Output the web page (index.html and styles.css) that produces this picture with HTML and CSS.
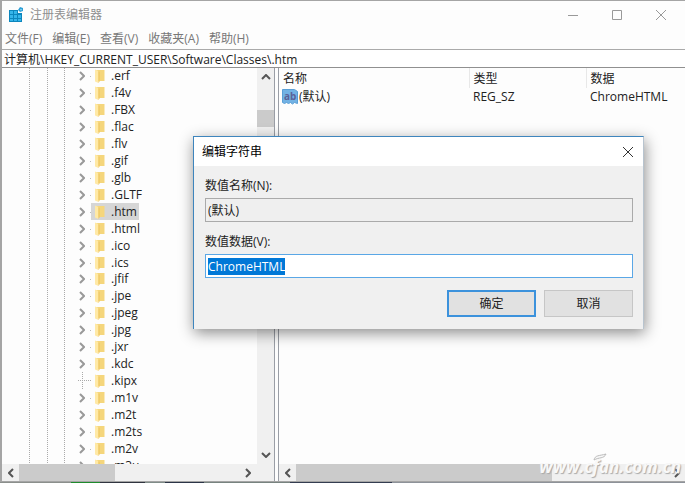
FILE: index.html
```
<!DOCTYPE html>
<html lang="zh-CN">
  <head>
    <meta charset="UTF-8">
    <title>注册表编辑器</title>
    <link rel="stylesheet" href="styles.css">
  </head>
  <body>
    <div class="window">
      <header class="titlebar">
        <svg class="app-icon" width="16" height="16" viewBox="0 0 16 16">
          <path d="M1 3h9v3h4v9H1z" fill="#0c86bd" />
          <path d="M2 4h3v3H2zM6 4h3v3H6zM2 8h3v3H2zM6 8h3v3H6zM10 8h3v3h-3zM2 12h3v2H2zM6 12h3v2H6zM10 12h3v2h-3z" fill="#35b5ea" />
          <path d="M12 0l3 1v3l-3 1-2-2z" fill="#2d9fd6" />
          <path d="M12 2l2 0-1 2z" fill="#8edaf7" />
        </svg>
        <h1>注册表编辑器</h1>
        <div class="window-buttons">
          <button aria-label="最小化"><svg width="10" height="10" viewBox="0 0 10 10"><path d="M0 5.5h10" /></svg></button>
          <button aria-label="最大化"><svg width="10" height="10" viewBox="0 0 10 10"><path d="M0.5 0.5h9v9h-9z" /></svg></button>
          <button aria-label="关闭"><svg width="10" height="10" viewBox="0 0 10 10"><path d="M0 0l10 10M10 0L0 10" /></svg></button>
        </div>
      </header>

      <nav class="menu">
        <button>文件(F)</button>
        <button>编辑(E)</button>
        <button>查看(V)</button>
        <button>收藏夹(A)</button>
        <button>帮助(H)</button>
      </nav>

      <input class="address" type="text" aria-label="地址" value="计算机\HKEY_CURRENT_USER\Software\Classes\.htm">

      <main class="panes">
        <section class="tree-pane">
          <div class="tree-view">
            <ul class="tree" id="tree"></ul>
          </div>
          <div class="scroll-v">
            <button aria-label="向上"><svg width="10" height="6" viewBox="0 0 10 6"><path d="M1 5l4-4 4 4" /></svg></button>
            <div class="thumb"></div>
            <button aria-label="向下"><svg width="10" height="6" viewBox="0 0 10 6"><path d="M1 1l4 4 4-4" /></svg></button>
          </div>
          <div class="scroll-h tree-scroll">
            <button aria-label="向左"><svg width="6" height="10" viewBox="0 0 6 10"><path d="M5 1L1 5l4 4" /></svg></button>
            <div class="thumb"></div>
            <button aria-label="向右"><svg width="6" height="10" viewBox="0 0 6 10"><path d="M1 1l4 4-4 4" /></svg></button>
          </div>
        </section>

        <section class="value-pane">
          <table class="values">
            <thead>
              <tr>
                <th class="col-name">名称</th>
                <th class="col-type">类型</th>
                <th>数据</th>
              </tr>
            </thead>
            <tbody>
              <tr>
                <td>
                  <div class="value-name">
                    <svg width="16" height="16" viewBox="0 0 16 16">
                      <path d="M0.5 0.5h12l3 2v12l-3-1-2 1.5-2-1.5-2 1-2-1-2 1-2-1z" fill="#72b2e4" stroke="#5a9fd6" />
                      <text x="2" y="11">ab</text>
                    </svg>
                    <span>(默认)</span>
                  </div>
                </td>
                <td>REG_SZ</td>
                <td>ChromeHTML</td>
              </tr>
            </tbody>
          </table>
          <div class="scroll-h value-scroll">
            <button aria-label="向左"><svg width="6" height="10" viewBox="0 0 6 10"><path d="M5 1L1 5l4 4" /></svg></button>
            <div class="thumb"></div>
            <button aria-label="向右"><svg width="6" height="10" viewBox="0 0 6 10"><path d="M1 1l4 4-4 4" /></svg></button>
          </div>
        </section>
      </main>
    </div>

    <form class="dialog" role="dialog" aria-labelledby="dialogTitle">
      <div class="dialog-title">
        <h2 id="dialogTitle">编辑字符串</h2>
        <button type="button" aria-label="关闭"><svg width="12" height="12" viewBox="0 0 12 12"><path d="M1 1l10 10M11 1L1 11" /></svg></button>
      </div>
      <div class="dialog-body">
        <label for="valueName">数值名称(N):</label>
        <input id="valueName" type="text" value="(默认)" readonly>
        <label for="valueData">数值数据(V):</label>
        <input id="valueData" type="text" value="ChromeHTML">
        <div class="actions">
          <button type="button" class="default">确定</button>
          <button type="button">取消</button>
        </div>
      </div>
    </form>

    <div class="watermark">www.cfan.com.cn
      <svg width="14" height="8" viewBox="0 0 14 8"><path d="M1 7C2 2 6 3 13 1 11 6 6 4 1 7z" /></svg>
    </div>

    <script>
      const keys = [
        ".erf", ".f4v", ".FBX", ".flac", ".flv", ".gif", ".glb", ".GLTF",
        ".htm", ".html", ".ico", ".ics", ".jfif", ".jpe", ".jpeg", ".jpg",
        ".jxr", ".kdc", ".kipx", ".m1v", ".m2t", ".m2ts", ".m2v", ".m3u"
      ];

      const arrow = '<svg class="arrow" width="6" height="10" viewBox="0 0 6 10"><path d="M1 1l4 4-4 4" /></svg>';
      const folder =
        '<svg class="folder" width="10" height="14" viewBox="0 0 10 14">' +
        '<path d="M1 1h8.5v11H1z" fill="#f5d67c" />' +
        '<path d="M0 0.5l3.5 1.5v12L0 12.5z" fill="#ffe9a6" />' +
        '<path d="M3.5 2v12l1-1.5V3z" fill="#eec35c" /></svg>';

      const tree = document.getElementById("tree");
      keys.forEach((key) => {
        const row = document.createElement("li");
        const leaf = key === ".kipx";
        if (leaf) row.classList.add("leaf");
        if (key === ".htm") row.classList.add("selected");
        row.innerHTML =
          '<span class="branch">' + (leaf ? "" : arrow) + "</span>" +
          '<span class="key">' + folder + key + "</span>";
        tree.appendChild(row);
      });

      const data = document.getElementById("valueData");
      data.focus();
      data.select();
    </script>
  </body>
</html>
```

FILE: styles.css
```
* {
  box-sizing: border-box;
}
body {
  margin: 0;
  height: 100vh;
  overflow: hidden;
  position: relative;
  display: flex;
  flex-direction: column;
  padding-bottom: 1px;
  background: linear-gradient(90deg, #8b8f8c 71px, #1d8a2c 71px, #1d8a2c 100px, #30343f 100px, #30343f 145px, #7f8c88 145px, #7f8c88 165px, #2b3447 165px, #2b3447 204px, #77837f 204px, #77837f 290px, #333c50 290px, #333c50 392px, #8d9299 392px);
  color: #222;
  font: 12px/16px "Open Sans", "Noto Sans CJK SC", sans-serif;
}
button,
input {
  font: inherit;
  color: inherit;
}
button {
  display: flex;
  align-items: center;
  justify-content: center;
  padding: 0;
  border: none;
  background: none;
}
h1,
h2 {
  margin: 0;
  font-size: 12px;
  font-weight: normal;
}
svg {
  flex: none;
}
.window {
  flex: 1;
  min-height: 0;
  display: flex;
  flex-direction: column;
  border: 1px solid #a5a5a5;
  border-left-width: 2px;
  border-right: none;
  background: #fdfdfd;
}
.titlebar {
  display: flex;
  align-items: center;
  height: 28px;
  padding: 0 2px 0 6px;
  color: #8f8f8f;
}
.titlebar h1 {
  flex: 1;
  margin-left: 6px;
}
.window-buttons {
  display: flex;
}
.window-buttons button {
  width: 44px;
  height: 28px;
}
.window-buttons svg {
  fill: none;
  stroke: #999;
}
.menu {
  display: flex;
  gap: 10px;
  height: 20px;
  padding-left: 3px;
  color: #777;
}
.address {
  height: 19px;
  padding: 0 2px;
  border: 1px solid #aaa;
  border-bottom-color: #909090;
  border-width: 1px 0;
  background: #fff;
  outline: none;
}
.panes {
  flex: 1;
  min-height: 0;
  display: flex;
}
.tree-pane {
  width: 273px;
  display: grid;
  grid-template-columns: 1fr 17px;
  grid-template-rows: minmax(0, 1fr) 17px;
  border-right: 1px solid #9a9ea6;
}
.tree-view {
  overflow: hidden;
  display: flex;
}

/* dotted guides of the parent levels */
.tree {
  flex: 1;
  display: grid;
  grid-auto-rows: 1fr;
  margin: 0 0 -10px;
  padding: 0;
  list-style: none;
  background-image:
    linear-gradient(#aaa 1px, transparent 1px),
    linear-gradient(#aaa 1px, transparent 1px),
    linear-gradient(#aaa 1px, transparent 1px);
  background-size: 1px 2px;
  background-position: 27px 0, 45px 0, 62px 0;
  background-repeat: repeat-y;
}
.tree li {
  display: flex;
  align-items: center;
  min-height: 0;
  padding-left: 76px;
}
.branch {
  width: 13px;
  height: 14px;
  display: flex;
  align-items: center;
  background: linear-gradient(90deg, #bbb 1px, transparent 1px) 12px 7px / 2px 1px no-repeat;
}
.leaf .branch {
  height: 100%;
  background:
    linear-gradient(#aaa 1px, transparent 1px) 4px 0 / 1px 2px repeat-y,
    linear-gradient(90deg, #aaa 1px, transparent 1px) 6px 8px / 2px 1px repeat-x;
}
.arrow {
  margin-left: 1px;
  fill: none;
  stroke: #999;
  stroke-width: 2;
}
.key {
  display: flex;
  align-items: center;
  gap: 6px;
  height: 100%;
  padding: 0 2px 0 4px;
}
.selected .key {
  background: #d6d6d6;
}
.scroll-v,
.scroll-h {
  display: flex;
  background: #f0f0f0;
}
.scroll-v {
  flex-direction: column;
}
.scroll-v button:last-child {
  margin-top: auto;
}
.scroll-h button:last-child {
  margin-left: auto;
}
.scroll-v button {
  width: 17px;
  height: 18px;
}
.scroll-h button {
  width: 17px;
  height: 17px;
}
.scroll-v svg,
.scroll-h svg {
  fill: none;
  stroke: #555;
  stroke-width: 2;
}
.scroll-v .thumb {
  height: 17px;
  margin-top: 24px;
  background: #cbcbcb;
}
.scroll-h .thumb {
  background: #cbcbcb;
}
.tree-scroll {
  grid-column: 1 / 3;
  padding-right: 18px;
}
.tree-scroll .thumb {
  width: 96px;
}
.value-pane {
  flex: 1;
  min-width: 0;
  display: flex;
  flex-direction: column;
  justify-content: space-between;
  margin-left: 3px;
  border-left: 1px solid #9a9ea6;
}
.values {
  width: 100%;
  table-layout: fixed;
  border-collapse: collapse;
}
.values th {
  height: 20px;
  padding: 2px 4px 0;
  font-weight: normal;
  text-align: left;
}
.values th + th {
  border-left: 1px solid #e8e8e8;
}
.col-name {
  width: 190px;
}
.col-type {
  width: 117px;
}
.values td {
  padding: 1px 4px 0;
}
.value-name {
  display: flex;
  align-items: center;
  gap: 1px;
  margin-left: -1px;
}
.value-name text {
  fill: #5b6299;
  font-size: 10px;
  font-weight: bold;
}
.value-scroll .thumb {
  width: 63%;
}
.dialog {
  position: absolute;
  left: 193px;
  top: 136px;
  width: 451px;
  border: 1px solid #3e85bd;
  border-right-color: #b8c4cf;
  border-bottom: none;
  background: #f0f0f0;
  box-shadow: 1px 4px 14px rgba(0, 0, 0, 0.45);
}
.dialog-title {
  display: flex;
  align-items: center;
  justify-content: space-between;
  height: 29px;
  padding: 0 9px 0 8px;
  background: #fff;
  color: #000;
}
.dialog-title svg {
  fill: none;
  stroke: #333;
}
.dialog-body {
  display: flex;
  flex-direction: column;
  padding: 12px 10px 12px 11px;
}
.dialog-body input {
  height: 24px;
  margin: 4px 0 12px;
  padding: 0 2px;
  border: 1px solid #aaa;
  background: #efefef;
  outline: none;
}
.dialog-body #valueData {
  border-color: #5aa7e6;
  background: #fff;
}
::selection {
  background: #0078d7;
  color: #fff;
}
.actions {
  display: flex;
  justify-content: flex-end;
  gap: 8px;
}
.actions button {
  width: 89px;
  height: 27px;
  border: 1px solid #c6c6c6;
  background: #e1e1e1;
}
.actions .default {
  border: 2px solid #3c92dc;
}
.watermark {
  position: absolute;
  right: 4px;
  bottom: 6px;
  color: #f8f8f8;
  font: italic bold 17px/20px "Open Sans", sans-serif;
  text-shadow: 1px 1px 1px #aaa;
}
.watermark svg {
  position: absolute;
  left: 54px;
  top: -4px;
  fill: #f8f8f8;
  stroke: #bbb;
}
```
